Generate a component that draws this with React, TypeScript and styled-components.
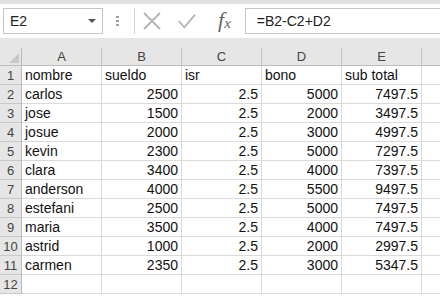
import React from 'react';
import styled, { createGlobalStyle } from 'styled-components';

const GlobalStyle = createGlobalStyle`
   body {
      margin: 0;
      background: #ffffff;
      overflow: hidden;
      font-family: 'Liberation Sans', Arial, sans-serif;
   }
`;

const columns = ['A', 'B', 'C', 'D', 'E'];

const rows: (string | number)[][] = [
   ['nombre', 'sueldo', 'isr', 'bono', 'sub total'],
   ['carlos', 2500, 2.5, 5000, 7497.5],
   ['jose', 1500, 2.5, 2000, 3497.5],
   ['josue', 2000, 2.5, 3000, 4997.5],
   ['kevin', 2300, 2.5, 5000, 7297.5],
   ['clara', 3400, 2.5, 4000, 7397.5],
   ['anderson', 4000, 2.5, 5500, 9497.5],
   ['estefani', 2500, 2.5, 5000, 7497.5],
   ['maria', 3500, 2.5, 4000, 7497.5],
   ['astrid', 1000, 2.5, 2000, 2997.5],
   ['carmen', 2350, 2.5, 3000, 5347.5],
   ['', '', '', '', ''],
];

const App = () => {
   return (
      <Wrapper>
         <GlobalStyle />
         <TopStrip />
         <Toolbar>
            <NameBox>
               <span>E2</span>
               <Caret />
            </NameBox>
            <Grip>
               <i />
               <i />
               <i />
            </Grip>
            <IconGroup>
               <IconSlot>
                  <svg width="20" height="20" viewBox="0 0 20 20">
                     <path d="M2 2 L18 18 M18 2 L2 18" stroke="#b4b4b4" strokeWidth="1.8" fill="none" />
                  </svg>
               </IconSlot>
               <IconSlot>
                  <svg width="22" height="20" viewBox="0 0 22 20">
                     <path d="M2 10 L8 17 L20 3" stroke="#b4b4b4" strokeWidth="2" fill="none" />
                  </svg>
               </IconSlot>
               <Fx>
                  f<sub>x</sub>
               </Fx>
            </IconGroup>
            <FormulaInput>=B2-C2+D2</FormulaInput>
         </Toolbar>
         <Gap />
         <Sheet>
            <Corner>
               <svg width="10" height="10" viewBox="0 0 10 10">
                  <path d="M10 0 L10 10 L0 10 Z" fill="#c8c8c8" />
               </svg>
            </Corner>
            {columns.map(col => (
               <ColHead key={col}>{col}</ColHead>
            ))}
            <ColHead $last />
            {rows.map((row, i) => (
               <React.Fragment key={i}>
                  <RowHead>{i + 1}</RowHead>
                  {row.map((v, j) => (
                     <Cell key={j} $num={typeof v === 'number'}>
                        {v}
                     </Cell>
                  ))}
                  <Cell $last />
               </React.Fragment>
            ))}
         </Sheet>
      </Wrapper>
   );
};

const Wrapper = styled.div`
   width: 440px;
   height: 299px;
   overflow: hidden;
   background: #ffffff;
`;

const TopStrip = styled.div`
   height: 4px;
   background: #e1e1e1;
`;

const Toolbar = styled.div`
   display: flex;
   align-items: center;
   height: 34px;
   background: #ffffff;
   padding-left: 3px;
`;

const NameBox = styled.div`
   box-sizing: border-box;
   display: flex;
   align-items: center;
   justify-content: space-between;
   width: 100px;
   height: 26px;
   border: 1px solid #c6c6c6;
   padding: 0 6px 0 6px;
   font-size: 14px;
   color: #222;
`;

const Caret = styled.div`
   width: 0;
   height: 0;
   border-left: 4px solid transparent;
   border-right: 4px solid transparent;
   border-top: 4px solid #555;
`;

const Grip = styled.div`
   display: flex;
   flex-direction: column;
   gap: 2px;
   margin-left: 13px;
   width: 3px;
   i {
      display: block;
      width: 3px;
      height: 2px;
      background: #a0a0a0;
   }
`;

const IconGroup = styled.div`
   display: flex;
   align-items: center;
   height: 26px;
   margin-left: 15px;
   border-left: 1px solid #d4d4d4;
   padding-left: 7px;
   gap: 15px;
`;

const IconSlot = styled.div`
   display: flex;
   align-items: center;
   justify-content: center;
   width: 20px;
   height: 22px;
`;

const Fx = styled.div`
   margin-left: 6px;
   font-family: 'Liberation Serif', 'Times New Roman', serif;
   font-style: italic;
   font-size: 22px;
   line-height: 22px;
   color: #666;
   sub {
      font-size: 15px;
      vertical-align: -1px;
   }
`;

const FormulaInput = styled.div`
   box-sizing: border-box;
   flex: 1;
   display: flex;
   align-items: center;
   height: 26px;
   margin-left: 14px;
   border: 1px solid #c6c6c6;
   border-right: none;
   padding-left: 11px;
   font-size: 14px;
   color: #222;
`;

const Gap = styled.div`
   height: 10px;
   background: #e6e6e6;
`;

const Sheet = styled.div`
   display: grid;
   grid-template-columns: 22px repeat(5, 80px) 1fr;
   grid-template-rows: 18px;
   grid-auto-rows: 19px;
   background: #ffffff;
`;

const Corner = styled.div`
   box-sizing: border-box;
   display: flex;
   align-items: flex-end;
   justify-content: flex-end;
   padding: 0 2px 2px 0;
   background: #e6e6e6;
   border-right: 1px solid #bcbcbc;
   border-bottom: 1px solid #bcbcbc;
`;

const ColHead = styled.div<{ $last?: boolean }>`
   box-sizing: border-box;
   display: flex;
   align-items: center;
   justify-content: center;
   background: #e6e6e6;
   border-right: ${p => (p.$last ? 'none' : '1px solid #c8c8c8')};
   border-bottom: 1px solid #bcbcbc;
   font-size: 13px;
   color: #444;
`;

const RowHead = styled.div`
   box-sizing: border-box;
   display: flex;
   align-items: center;
   justify-content: center;
   background: #e6e6e6;
   border-right: 1px solid #bcbcbc;
   border-bottom: 1px solid #c8c8c8;
   font-size: 13px;
   color: #444;
`;

const Cell = styled.div<{ $num?: boolean; $last?: boolean }>`
   box-sizing: border-box;
   display: flex;
   align-items: center;
   justify-content: ${p => (p.$num ? 'flex-end' : 'flex-start')};
   padding: 0 3px;
   border-right: ${p => (p.$last ? 'none' : '1px solid #dadada')};
   border-bottom: 1px solid #dadada;
   font-size: 14px;
   color: #111;
   white-space: nowrap;
   overflow: hidden;
`;

export default App;
